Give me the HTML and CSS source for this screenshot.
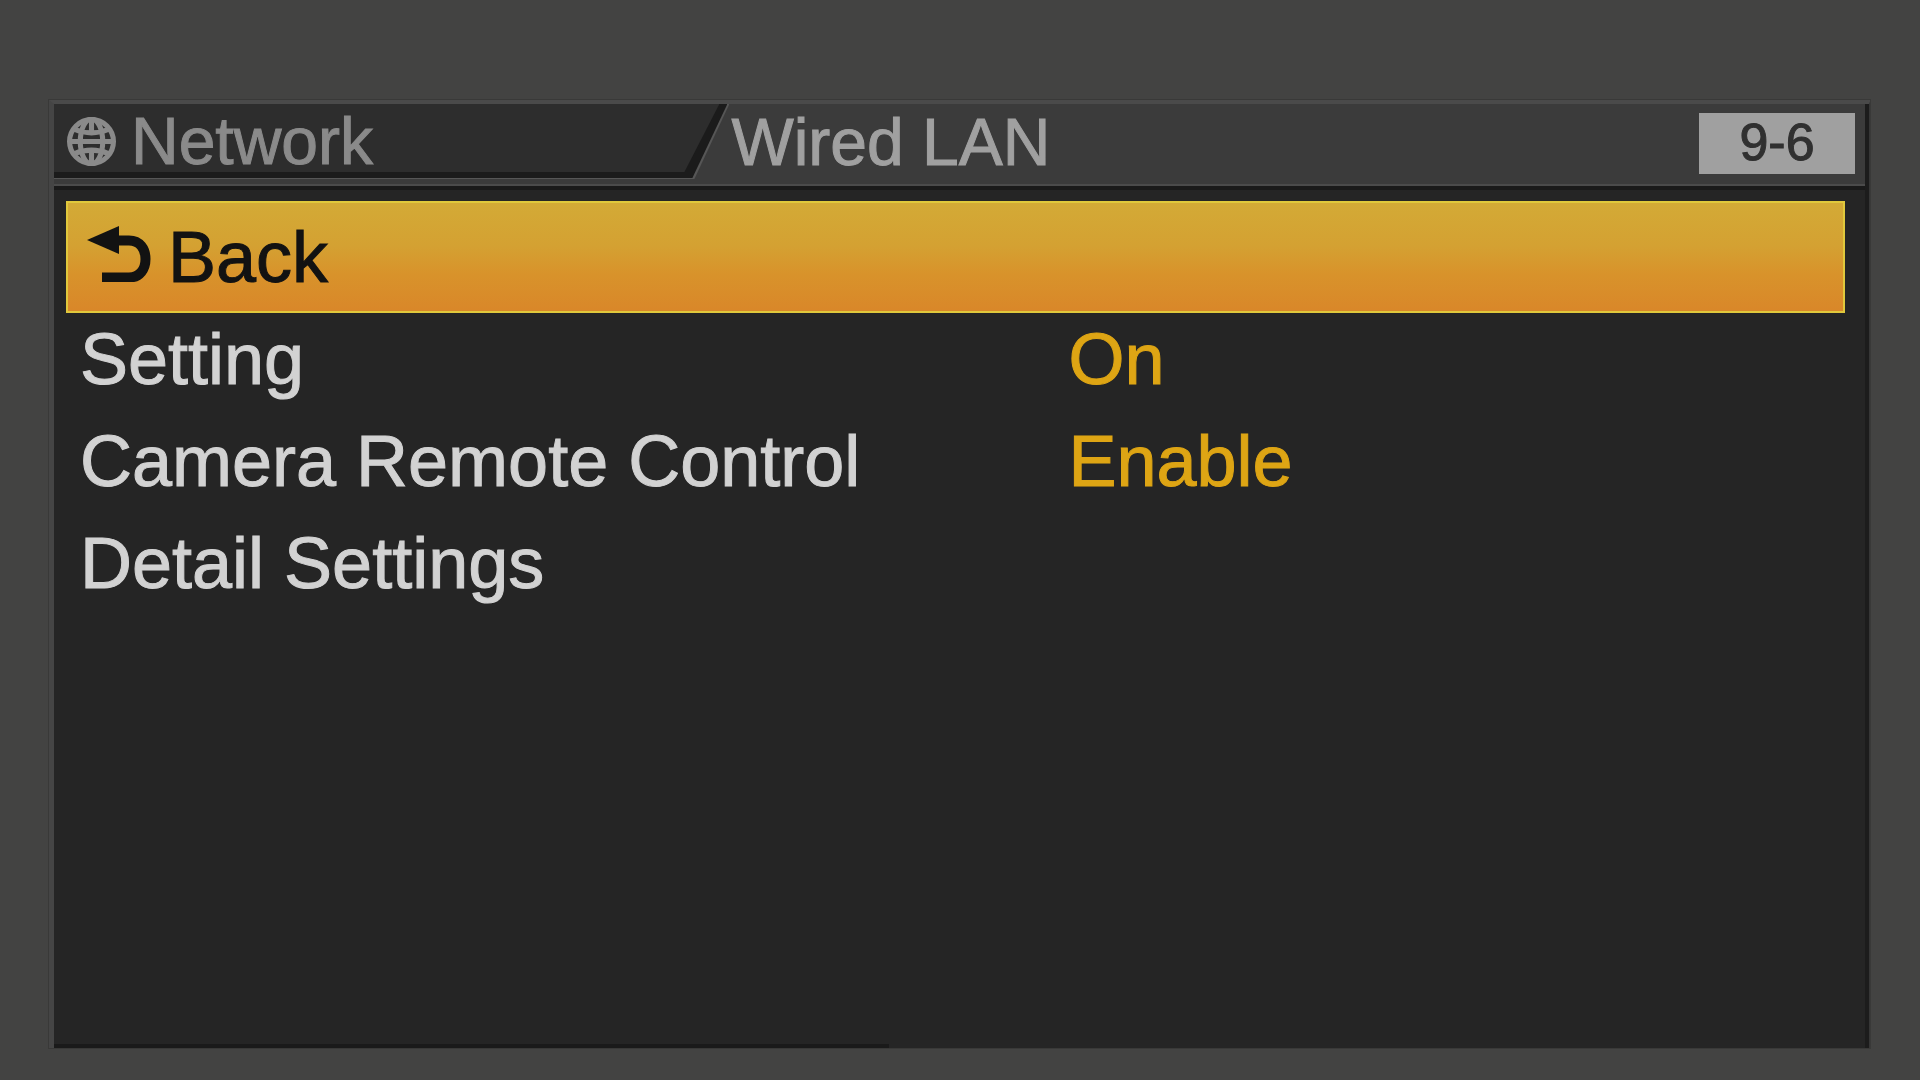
FILE: index.html
```html
<!DOCTYPE html>
<html lang="en">
<head>
<meta charset="utf-8">
<title>Wired LAN</title>
<link rel="stylesheet" href="styles.css">
</head>
<body>
<main class="panel">
  <header class="header">
    <div class="tab-edge">
      <div class="tab-shade">
        <a class="tab" href="#network">
          <svg class="globe" viewBox="0 0 48 48" aria-hidden="true">
            <circle cx="24" cy="24" r="21.5"/>
            <ellipse cx="24" cy="24" rx="11" ry="22"/>
            <path d="M24 3v13M24 32v13M2 24h44M7 12Q24 19 41 12M7 36Q24 29 41 36"/>
          </svg>
          <span>Network</span>
        </a>
      </div>
    </div>
    <h1 class="title">Wired LAN</h1>
    <span class="page">9-6</span>
  </header>
  <nav class="menu">
    <button class="row back" type="button">
      <svg class="arrow" viewBox="0 0 64 56" aria-hidden="true">
        <path class="head" d="M0 14L32 0V28Z"/>
        <path class="tail" d="M30 14.500H42C53 14.500 58.500 23 58.500 33S53 51.500 42 51.500H15"/>
      </svg>
      <span>Back</span>
    </button>
    <button class="row item" type="button"><span>Setting</span><span class="value">On</span></button>
    <button class="row item" type="button"><span>Camera Remote Control</span><span class="value">Enable</span></button>
    <button class="row item" type="button"><span>Detail Settings</span></button>
  </nav>
  <div class="progress"></div>
</main>
</body>
</html>
```
FILE: styles.css
```css
* { box-sizing: border-box; }

body {
  margin: 0;
  min-height: 100vh;
  padding: 99px 49px 31px 48px;
  display: flex;
  background: #434342;
  color: #d2d2d2;
  font-family: "Liberation Sans", Arial, sans-serif;
  -webkit-text-stroke: 1px currentColor;
}

.panel {
  flex: 1;
  display: flex;
  flex-direction: column;
  border: solid #4a4a4a;
  border-width: 5px 2px 1px 6px;
  border-left-color: #454545;
  border-right-color: #363636;
  outline: 1px solid #393938;
  outline-offset: -1px;
  background: #252525;
  box-shadow: inset -4px 0 #1c1c1c;
}

.header {
  display: flex;
  align-items: flex-start;
  height: 82px;
  margin-right: 4px;
  padding-right: 10px;
  background: #3b3b3b;
  border-bottom: 2px solid #4b4b4b;
  box-shadow: 0 4px #1a1a1a;
  font-size: 66px;
}

.tab-edge,
.tab-shade,
.tab {
  clip-path: polygon(0 0, 100% 0, calc(100% - 35px) 100%, 0 100%);
}

.tab-edge {
  width: 37.5%;
  height: 75px;
  padding: 0 2px 1px 0;
  background: #565656;
}

.tab-shade {
  height: 100%;
  padding: 0 8px 6px 0;
  background: #1b1b1b;
}

.tab {
  display: flex;
  align-items: center;
  gap: 15px;
  height: 100%;
  padding: 6px 0 0 13px;
  background: #2d2d2d;
  color: #8a8a8a;
  line-height: 74px;
  text-decoration: none;
}

.globe {
  width: 49px;
  height: 49px;
  fill: none;
  stroke: #8a8a8a;
  stroke-width: 5;
}

.title {
  flex: 1;
  margin: 0;
  padding-left: 2px;
  font-size: 66px;
  font-weight: 400;
  line-height: 76px;
  color: #a0a0a0;
}

.page {
  width: 156px;
  height: 61px;
  margin-top: 9px;
  background: #a0a0a0;
  color: #303030;
  font-size: 52px;
  line-height: 58px;
  text-align: center;
}

.menu {
  flex: 1;
  display: flex;
  flex-direction: column;
  gap: 10px;
  padding: 15px 24px 0 12px;
}

.row {
  width: 100%;
  margin: 0;
  border: 0;
  padding: 0 0 0 14px;
  background: none;
  color: inherit;
  font: inherit;
  font-size: 72px;
  line-height: 92px;
  text-align: left;
}

.item {
  display: grid;
  grid-template-columns: 56% 44%;
}

.value { color: #dea514; }

.back {
  display: flex;
  align-items: center;
  gap: 17px;
  height: 112px;
  margin-bottom: -10px;
  padding-left: 19px;
  border: 2px solid #e0c83c;
  background: linear-gradient(#d3aa36, #d4a132 40%, #d8932b 65%, #d98729);
  color: #121212;
}

.arrow {
  width: 64px;
  height: 56px;
  margin-bottom: 6px;
}

.arrow .head { fill: #121212; }

.arrow .tail {
  fill: none;
  stroke: #121212;
  stroke-width: 10;
}

.progress {
  width: 46%;
  height: 4px;
  background: #1a1a1a;
}
```
